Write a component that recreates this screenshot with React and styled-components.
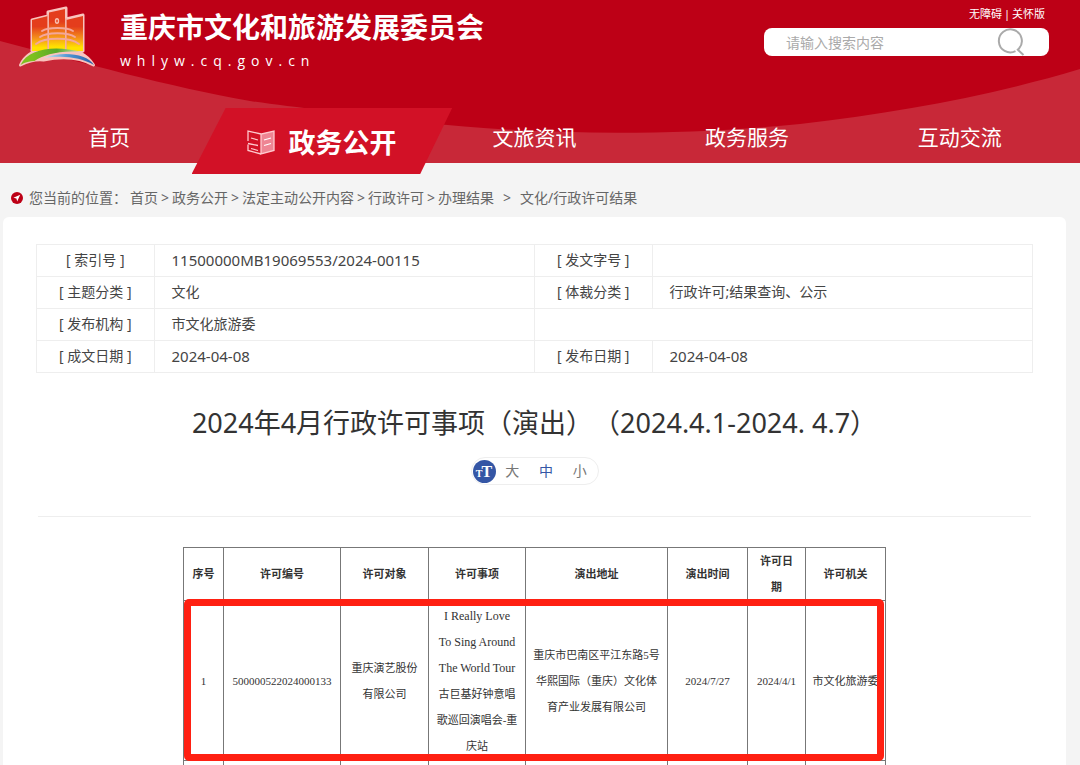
import React, { useState } from 'react';
import styled, { createGlobalStyle } from 'styled-components';

const GlobalStyle = createGlobalStyle`
  * {
    box-sizing: border-box;
  }

  body {
    margin: 0;
    background: #f4f4f4;
    color: #444;
    font-family: 'Noto Sans', 'Noto Sans CJK SC', sans-serif;
    font-size: 14px;
    text-spacing-trim: space-all;
  }

  a {
    color: inherit;
    text-decoration: none;
  }
`;

const Header = styled.header`
  position: relative;
  background: #bd0016;
  color: #fff;
`;

const Wave = styled.svg`
  position: absolute;
  inset: 0;
  width: 100%;
  height: 100%;
`;

const TopBar = styled.div`
  position: relative;
  display: flex;
  justify-content: space-between;
  height: 108px;
  padding: 6px 31px 0 16px;
`;

const Brand = styled.a`
  display: flex;
  gap: 22px;
`;

const BrandText = styled.div`
  display: flex;
  flex-direction: column;
`;

const BrandName = styled.span`
  font-size: 28px;
  font-weight: 700;
  line-height: 42px;
`;

const BrandDomain = styled.span`
  font-family: 'Open Sans', sans-serif;
  font-size: 14px;
  line-height: 26px;
  letter-spacing: 6px;
`;

const Tools = styled.div`
  display: flex;
  flex-direction: column;
  align-items: flex-end;
  width: 285px;
`;

const ToolLinks = styled.div`
  display: flex;
  gap: 2px;
  padding-right: 4px;
  font-size: 11px;
  line-height: 16px;
`;

const Search = styled.form`
  display: flex;
  align-items: center;
  width: 100%;
  height: 28px;
  margin-top: 6px;
  padding: 0 24px 0 22px;
  border-radius: 8px;
  background: #fff;
`;

const SearchInput = styled.input`
  flex: 1;
  min-width: 0;
  padding: 0;
  border: none;
  outline: none;
  background: none;
  color: #444;
  font-family: inherit;
  font-size: 14px;

  &::placeholder {
    color: #aaa;
  }
`;

const SearchButton = styled.button`
  display: flex;
  padding: 0;
  border: none;
  background: none;
  cursor: pointer;
`;

const Nav = styled.nav`
  position: relative;
  display: grid;
  grid-template-columns: repeat(5, 1fr);
  height: 55px;
  margin: 0 14px 0 3px;
`;

const NavItem = styled.a`
  display: flex;
  align-items: center;
  justify-content: center;
  gap: 13px;
  height: 55px;
  font-size: 21px;
`;

const ActiveNavItem = styled(NavItem)`
  height: 66px;
  margin: 0 -24px;
  background: #d21126;
  clip-path: polygon(34px 0, 100% 0, calc(100% - 32px) 100%, 0 100%);
  font-size: 27px;
  font-weight: 700;
`;

const Crumbs = styled.nav`
  display: flex;
  align-items: center;
  gap: 3px;
  padding: 23px 11px 7px;
  color: #666;
  line-height: 24px;
`;

const CrumbIcon = styled.svg`
  margin-right: 3px;
`;

const LastSeparator = styled.span`
  padding: 0 6px;
`;

const Card = styled.main`
  margin: 0 14px 0 3px;
  padding: 27px 33px 0;
  border-radius: 6px 6px 0 0;
  background: #fff;
`;

const InfoTable = styled.table`
  width: 100%;
  table-layout: fixed;
  border-collapse: collapse;
`;

const InfoLabel = styled.th`
  height: 32px;
  padding: 0 0 2px;
  border: 1px solid #eee;
  font-weight: 400;
  line-height: 20px;
`;

const InfoValue = styled.td`
  height: 32px;
  padding: 0 0 2px 17px;
  border: 1px solid #eee;
  font-size: ${props => (props.$numeric ? 15 : 14)}px;
  line-height: 20px;
`;

const Title = styled.h1`
  margin: 30px 0 14px;
  color: #333;
  font-size: 27px;
  font-weight: 400;
  line-height: 40px;
  text-align: center;
`;

const SizePicker = styled.div`
  display: flex;
  align-items: center;
  width: 128px;
  height: 28px;
  margin: 0 auto;
  padding: 0 1px;
  border: 1px solid #eee;
  border-radius: 14px;
`;

const SizeIcon = styled.span`
  display: flex;
  align-items: baseline;
  justify-content: center;
  width: 23px;
  height: 23px;
  border-radius: 50%;
  background: #3456a5;
  color: #fff;
  font-family: 'Liberation Serif', serif;
  font-size: 10px;
  font-weight: 700;
  line-height: 23px;
`;

const SizeIconLarge = styled.span`
  margin-left: -1px;
  font-size: 16px;
`;

const SizeButton = styled.button`
  flex: 1;
  padding: 0 0 3px;
  border: none;
  background: none;
  color: ${props => (props.$active ? '#3456a5' : '#777')};
  font-family: inherit;
  font-size: 14px;
  cursor: pointer;
`;

const Divider = styled.hr`
  margin: 31px 2px 30px;
  border: none;
  border-top: 1px solid #eee;
`;

const PermitTable = styled.table`
  width: 702px;
  max-width: 100%;
  margin: 0 auto;
  table-layout: fixed;
  border-collapse: collapse;
  color: #333;
  font-family: 'Liberation Serif', 'Noto Sans CJK SC', serif;
  font-size: 11px;
  line-height: 26px;
  text-align: center;
`;

const PermitHead = styled.th`
  width: ${props => props.$width}px;
  padding: 0 8px;
  border: 1px solid #777;
`;

const PermitCell = styled.td`
  height: 26px;
  padding: 1px 0;
  border: 1px solid #777;
  white-space: pre-line;
`;

const HighlightedRow = styled.tr`
  position: relative;
  height: 160px;
`;

const Highlight = styled.span`
  position: absolute;
  inset: -2px 2px 0 0;
  border: 7px solid #ff2012;
  border-radius: 5px;
  pointer-events: none;
`;

const Latin = styled.span`
  font-size: 12px;
`;

const Logo = () => (
  <svg width="82" height="66" viewBox="16 6 82 66" aria-hidden="true">
    <defs>
      <linearGradient id="tower" x1="0" y1="0" x2="0" y2="1">
        <stop offset="0.3" stopColor="#e43d1c" />
        <stop offset="0.65" stopColor="#f5951b" />
        <stop offset="0.9" stopColor="#ffe100" />
      </linearGradient>
      <linearGradient id="grass">
        <stop offset="0.2" stopColor="#7dc01f" />
        <stop offset="0.6" stopColor="#57a82c" />
        <stop offset="1" stopColor="#c9e6b0" />
      </linearGradient>
      <linearGradient id="river">
        <stop offset="0" stopColor="#cde6f5" />
        <stop offset="0.5" stopColor="#4d94d2" />
        <stop offset="1" stopColor="#2a5fa8" />
      </linearGradient>
    </defs>
    <g strokeLinejoin="round">
      <path
        d="M32 51V20l16-4V12l18-4v11l17-4v36Z M20.500 65c9-20 41-21 60-12 6 3 10 7 13 12-14-8-31-9-50-5-8-1-15 1-23 5Z"
        fill="#f9c3bd"
        stroke="#f9c3bd"
        strokeWidth="3"
      />
      <path d="M32 51V20l16-4v35Z" fill="url(#tower)" />
      <path d="M49 51V12.500l16-3.500v42Z" fill="url(#tower)" />
      <path d="M66 51V20l17-4v35Z" fill="url(#tower)" />
    </g>
    <ellipse cx="57" cy="21" rx="1.500" ry="2.200" fill="#e43d1c" stroke="#f9c0ae" strokeWidth="1.400" />
    <g fill="none" stroke="#f4a79b" strokeWidth="2" strokeLinecap="round">
      <path d="M48 15v34M66 19v30" strokeWidth="1.400" />
      <path d="M42 31c6-4 25-4 31 0" />
      <path d="M40 37c7-5 28-5 35 0" />
      <path d="M36 44c9-7 34-7 43 0" />
    </g>
    <path d="M20.500 65c8-17 35-20 61-13-22-2-38 3-47 9-5 0-9 1-14 4Z" fill="url(#grass)" />
    <path d="M44 58c17-7 43-5 50 7-13-8-32-10-50-7Z" fill="url(#river)" />
  </svg>
);

const SearchIcon = () => (
  <svg width="28" height="28" viewBox="0 0 28 28" fill="none" stroke="#aaa" strokeWidth="2" aria-hidden="true">
    <path d="M18.500 23.200A11.500 11.500 0 1 1 22 20.500l-1.200 1.200L26.500 27" />
  </svg>
);

const BookIcon = () => (
  <svg width="28" height="30" viewBox="1 -4 28 30" fill="none" stroke="#ffc9ce" strokeWidth="1.300" aria-hidden="true">
    <path d="M15 4v20L28 20.500V1Z" fill="#ee8593" />
    <path d="M15 4 2 1v10M2 14.500v6L15 24" />
    <path d="m5 8 7 2M2 13.500l10 2M5 18.500l7 2" />
    <path d="m18 10 7-2M18 15.500l7-2" stroke="#fff" />
  </svg>
);

const LocationIcon = () => (
  <CrumbIcon width="12" height="12" viewBox="0 0 12 12" aria-hidden="true">
    <circle cx="6" cy="6" r="6" fill="#bd0016" />
    <path d="M9.200 2.800 2.400 5.800l3 .8.800 3Z" fill="#fff" />
  </CrumbIcon>
);

const crumbs = ['首页', '政务公开', '法定主动公开内容', '行政许可', '办理结果'];

const columns = [
  { name: '序号', width: 40 },
  { name: '许可编号', width: 117 },
  { name: '许可对象', width: 88 },
  { name: '许可事项', width: 97 },
  { name: '演出地址', width: 142 },
  { name: '演出时间', width: 80 },
  { name: '许可日期', width: 58 },
  { name: '许可机关', width: 80 },
];

const App = () => {
  const [keyword, setKeyword] = useState('');
  const [size, setSize] = useState('中');

  return (
    <>
      <GlobalStyle />
      <Header>
        <Wave viewBox="0 0 1080 163" preserveAspectRatio="none" aria-hidden="true">
          <path
            d="M0 41C80 62 170 87 250 101C290 107 350 113 420 122C540 136 680 136 800 124C900 112 990 96 1080 69V163H0Z"
            fill="#c82838"
          />
        </Wave>
        <TopBar>
          <Brand href="#">
            <Logo />
            <BrandText>
              <BrandName>重庆市文化和旅游发展委员会</BrandName>
              <BrandDomain>whlyw.cq.gov.cn</BrandDomain>
            </BrandText>
          </Brand>
          <Tools>
            <ToolLinks>
              <a href="#">无障碍</a>
              <span>|</span>
              <a href="#">关怀版</a>
            </ToolLinks>
            <Search onSubmit={e => e.preventDefault()}>
              <SearchInput
                aria-label="搜索"
                placeholder="请输入搜索内容"
                value={keyword}
                onChange={e => setKeyword(e.target.value)}
              />
              <SearchButton type="submit" aria-label="搜索">
                <SearchIcon />
              </SearchButton>
            </Search>
          </Tools>
        </TopBar>
        <Nav>
          <NavItem href="#">首页</NavItem>
          <ActiveNavItem href="#">
            <BookIcon />
            政务公开
          </ActiveNavItem>
          <NavItem href="#">文旅资讯</NavItem>
          <NavItem href="#">政务服务</NavItem>
          <NavItem href="#">互动交流</NavItem>
        </Nav>
      </Header>

      <Crumbs>
        <LocationIcon />
        <span>您当前的位置：</span>
        {crumbs.map((name, i) => (
          <React.Fragment key={name}>
            {i > 0 && <span>&gt;</span>}
            <a href="#">{name}</a>
          </React.Fragment>
        ))}
        <LastSeparator>&gt;</LastSeparator>
        <span>文化/行政许可结果</span>
      </Crumbs>

      <Card>
        <InfoTable>
          <colgroup>
            <col width="11.8%" />
            <col width="38.2%" />
            <col width="11.8%" />
            <col width="38.2%" />
          </colgroup>
          <tbody>
            <tr>
              <InfoLabel>[ 索引号 ]</InfoLabel>
              <InfoValue $numeric>11500000MB19069553/2024-00115</InfoValue>
              <InfoLabel>[ 发文字号 ]</InfoLabel>
              <InfoValue />
            </tr>
            <tr>
              <InfoLabel>[ 主题分类 ]</InfoLabel>
              <InfoValue>文化</InfoValue>
              <InfoLabel>[ 体裁分类 ]</InfoLabel>
              <InfoValue>行政许可;结果查询、公示</InfoValue>
            </tr>
            <tr>
              <InfoLabel>[ 发布机构 ]</InfoLabel>
              <InfoValue>市文化旅游委</InfoValue>
              <InfoValue colSpan={2} />
            </tr>
            <tr>
              <InfoLabel>[ 成文日期 ]</InfoLabel>
              <InfoValue $numeric>2024-04-08</InfoValue>
              <InfoLabel>[ 发布日期 ]</InfoLabel>
              <InfoValue $numeric>2024-04-08</InfoValue>
            </tr>
          </tbody>
        </InfoTable>

        <Title>2024年4月行政许可事项（演出）（2024.4.1-2024. 4.7）</Title>

        <SizePicker>
          <SizeIcon aria-hidden="true">
            T<SizeIconLarge>T</SizeIconLarge>
          </SizeIcon>
          {['大', '中', '小'].map(name => (
            <SizeButton key={name} type="button" $active={size === name} onClick={() => setSize(name)}>
              {name}
            </SizeButton>
          ))}
        </SizePicker>

        <Divider />

        <PermitTable>
          <thead>
            <tr>
              {columns.map(column => (
                <PermitHead key={column.name} $width={column.width}>
                  {column.name}
                </PermitHead>
              ))}
            </tr>
          </thead>
          <tbody>
            <HighlightedRow>
              <PermitCell>
                1<Highlight />
              </PermitCell>
              <PermitCell>500000522024000133</PermitCell>
              <PermitCell>{'重庆演艺股份\n有限公司'}</PermitCell>
              <PermitCell>
                <Latin>{'I Really Love\nTo Sing Around\nThe World Tour\n'}</Latin>
                {'古巨基好钟意唱\n歌巡回演唱会-重\n庆站'}
              </PermitCell>
              <PermitCell>{'重庆市巴南区平江东路5号\n华熙国际（重庆）文化体\n育产业发展有限公司'}</PermitCell>
              <PermitCell>2024/7/27</PermitCell>
              <PermitCell>2024/4/1</PermitCell>
              <PermitCell>市文化旅游委</PermitCell>
            </HighlightedRow>
            <tr>
              {columns.map(column => (
                <PermitCell key={column.name} />
              ))}
            </tr>
          </tbody>
        </PermitTable>
      </Card>
    </>
  );
};

export default App;
